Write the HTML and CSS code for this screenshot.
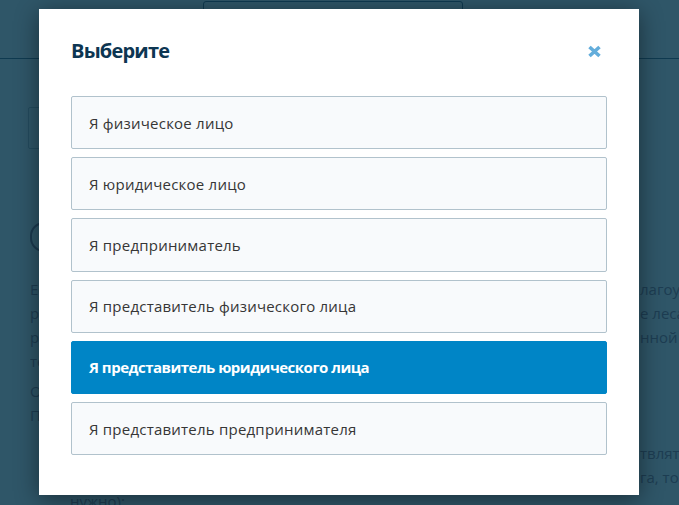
FILE: index.html
```html
<!DOCTYPE html>
<html lang="ru">
<head>
<meta charset="utf-8">
<title>Выберите</title>
<link rel="stylesheet" href="styles.css">
</head>
<body>
<div class="page">
  <div class="topbar"><div class="tab"></div></div>
  <div class="field"></div>
  <div class="pill"></div>
  <div class="content">
    <div class="para">
      <div class="ln"><span class="l">Если в рамках проведения работ по б</span><span class="r">лагоустройства</span></div>
      <div class="ln"><span class="l">работ в границах территории, покрытой</span><span class="r">е лесами</span></div>
      <div class="ln"><span class="l">разрешение выдается отделом администрации райо</span><span class="r">нной администрации</span></div>
      <div class="ln"><span class="l">территории.</span></div>
    </div>
    <div class="para"><div class="ln"><span class="l">Основание для получения разрешения</span></div></div>
    <div class="para tight"><div class="ln"><span class="l">Порядок получения</span></div></div>
    <div class="para list">
      <div class="ln ind"><span class="l">Если работы будут осущес</span><span class="r">твлять</span></div>
      <div class="ln ind"><span class="l">вы не являетесь собственником участка, друг</span><span class="r">га, то</span></div>
      <div class="ln ind"><span class="l">нужно):</span></div>
    </div>
  </div>
</div>

<div class="modal">
  <div class="modal-head">
    <h2 class="modal-title">Выберите</h2>
    <button class="close" aria-label="Закрыть">
      <svg width="15" height="13" viewBox="0 0 15 13"><path d="M2.5 2 L12.5 11 M12.5 2 L2.5 11" stroke="#63addb" stroke-width="3.6" stroke-linecap="butt"/></svg>
    </button>
  </div>
  <div class="options">
    <div class="opt">Я физическое лицо</div>
    <div class="opt">Я юридическое лицо</div>
    <div class="opt">Я предприниматель</div>
    <div class="opt">Я представитель физического лица</div>
    <div class="opt active">Я представитель юридического лица</div>
    <div class="opt">Я представитель предпринимателя</div>
  </div>
</div>
</body>
</html>
```

FILE: styles.css
```css
html, body {
  margin: 0;
  padding: 0;
  height: 100%;
  overflow: hidden;
}
body {
  background: #2f5668;
  font-family: "Open Sans", "Noto Sans", sans-serif;
}
.page {
  height: 505px;
  overflow: hidden;
  color: #1d3d52;
}
.topbar {
  height: 58px;
  border-bottom: 1px solid #0f3a50;
  overflow: hidden;
}
.tab {
  margin: 1px 0 0 203px;
  width: 258px;
  height: 30px;
  border: 1px solid #0f3a50;
  border-radius: 3px;
}
.field {
  margin: 48px 0 0 28px;
  width: 320px;
  height: 40px;
  border: 1px solid #234b5e;
  border-radius: 2px;
}
.pill {
  margin: 73px 0 0 30px;
  width: 200px;
  height: 26px;
  border: 2px solid #1b3a50;
  border-radius: 14px;
}
.content {
  margin-top: 25px;
  padding-left: 30px;
  font-size: 15px;
  line-height: 24px;
}
.para + .para {
  margin-top: 6px;
}
.para.tight {
  margin-top: 0;
}
.para.list {
  margin-top: 14px;
}
.ln {
  display: flex;
  white-space: nowrap;
}
.ln .l {
  width: 610px;
  flex: none;
  overflow: hidden;
}
.ln.ind {
  padding-left: 40px;
}
.ln.ind .l {
  width: 570px;
}
.modal {
  position: absolute;
  top: 9px;
  left: 39px;
  width: 600px;
  height: 486px;
  box-sizing: border-box;
  padding: 30px 32px;
  background: #fff;
  box-shadow: 0 4px 22px rgba(0, 0, 0, 0.45);
}
.modal-head {
  display: flex;
  align-items: center;
  justify-content: space-between;
  height: 24px;
  margin-bottom: 33px;
}
.modal-title {
  margin: 0;
  font-size: 20px;
  line-height: 24px;
  font-weight: 700;
  color: #0d3652;
  letter-spacing: -0.8px;
}
.close {
  margin: 0 5px 0 0;
  padding: 0;
  border: 0;
  background: none;
  display: flex;
  width: 15px;
  height: 13px;
}
.options {
  display: flex;
  flex-direction: column;
  gap: 8px;
}
.opt {
  height: 53.2px;
  box-sizing: border-box;
  display: flex;
  align-items: center;
  padding-left: 17px;
  border: 1px solid #b1c2cc;
  border-radius: 2px;
  background: #f8fafc;
  color: #363636;
  font-size: 15px;
  letter-spacing: 0.22px;
}
.opt.active {
  background: #0085c6;
  border-color: #0085c6;
  color: #fff;
  font-weight: 700;
  letter-spacing: -0.5px;
}
```
